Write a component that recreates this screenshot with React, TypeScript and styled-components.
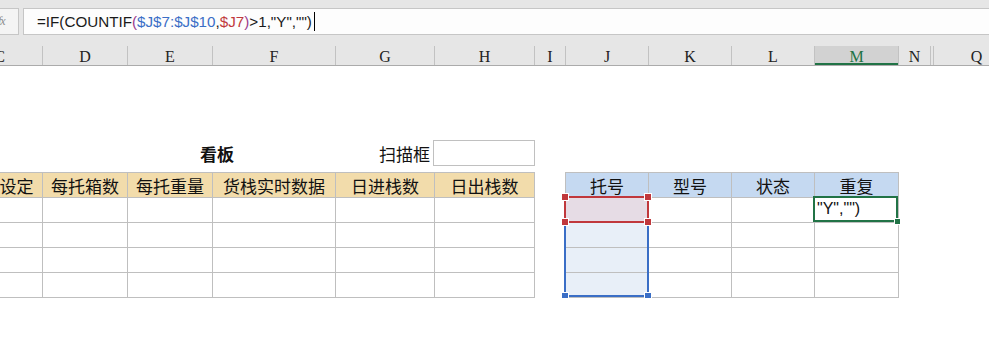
import React from 'react';
import styled, { createGlobalStyle, css } from 'styled-components';

const GlobalStyle = createGlobalStyle`
  html, body { margin: 0; padding: 0; background: #ffffff; overflow: hidden; }
  body { font-family: "Noto Sans CJK SC", "Liberation Sans", sans-serif; }
`;

const Window = styled.div`
  width: 989px;
  height: 363px;
  overflow: hidden;
  background: #ffffff;
`;

/* ---------- formula bar ---------- */
const FormulaArea = styled.div`
  height: 46px;
  box-sizing: border-box;
  padding-top: 8px;
  background: #e6e6e6;
  display: flex;
  align-items: flex-start;
  gap: 4px;
`;

const FxBox = styled.div`
  width: 19px;
  height: 27px;
  box-sizing: border-box;
  border: 1px solid #c6c6c6;
  border-left: none;
  background: #f4f4f4;
  display: flex;
  align-items: center;
  overflow: hidden;
  color: #8c8c8c;
  font: italic 12px "Liberation Serif", serif;
`;

const FxGlyph = styled.span`
  margin-left: -2px;
  letter-spacing: -1px;
`;

const FormulaInput = styled.div`
  flex: 1;
  height: 27px;
  box-sizing: border-box;
  border: 1px solid #c6c6c6;
  border-right: none;
  background: #fdfdfd;
  padding-left: 13px;
  display: flex;
  align-items: center;
  font: 15.2px "Liberation Sans", Arial, sans-serif;
  color: #1a1a1a;
  white-space: pre;
`;

const Tok = styled.span<{ $c?: string }>`
  color: ${(p) => p.$c || '#1a1a1a'};
`;

const Caret = styled.span`
  display: inline-block;
  width: 0;
  height: 19px;
  border-left: 1.5px solid #000;
  margin-left: 2px;
`;

/* ---------- sheet ---------- */
const Viewport = styled.div`
  overflow: hidden;
  width: 989px;
`;

const Canvas = styled.div`
  margin-left: -43px;
  width: 1100px;
`;

const HeaderBar = styled.div`
  display: flex;
  height: 20px;
  box-sizing: border-box;
  border-bottom: 1px solid #ababab;
  background: #e6e6e6;
`;

const ColHead = styled.div<{ $w: number; $sel?: boolean }>`
  width: ${(p) => p.$w}px;
  flex: none;
  box-sizing: border-box;
  border-right: 1px solid #c2c2c2;
  display: flex;
  align-items: center;
  justify-content: center;
  padding-top: 2px;
  font: 16px "Liberation Serif", "DejaVu Serif", serif;
  color: #222;
  ${(p) =>
    p.$sel &&
    css`
      background: #d2d2d2;
      color: #217346;
      box-shadow: inset 0 -2px 0 #217346;
    `}
`;

const Body = styled.div`
  padding-top: 74px;
`;

const TitleRow = styled.div`
  width: 578px;
  height: 26px;
  display: flex;
  align-items: center;
`;

const Title = styled.div`
  margin-left: 243px;
  font-weight: 700;
  font-size: 17px;
  color: #111;
`;

const ScanLabel = styled.div`
  margin-left: auto;
  margin-right: 3px;
  font-size: 17px;
  color: #111;
`;

const ScanBox = styled.div`
  width: 102px;
  height: 26px;
  box-sizing: border-box;
  border: 1px solid #c0c0c0;
  background: #fff;
`;

const TablesRow = styled.div`
  display: flex;
  align-items: flex-start;
  margin-top: 6px;
`;

const Table = styled.div<{ $cols: number[]; $leftBorder?: boolean; $offset?: number }>`
  display: grid;
  grid-template-columns: ${(p) => p.$cols.map((c) => `${c}px`).join(' ')};
  grid-auto-rows: 25px;
  border-top: 1px solid #bfbfbf;
  border-left: ${(p) => (p.$leftBorder ? '1px solid #bfbfbf' : 'none')};
  margin-left: ${(p) => p.$offset || 0}px;
`;

const Cell = styled.div<{ $head?: 'tan' | 'blue'; $fill?: 'pink' | 'blue' }>`
  position: relative;
  box-sizing: border-box;
  border-right: 1px solid #bfbfbf;
  border-bottom: 1px solid #bfbfbf;
  display: flex;
  align-items: center;
  justify-content: center;
  font-size: 17px;
  color: #111;
  white-space: nowrap;
  background: ${(p) =>
    p.$head === 'tan'
      ? '#f2dcab'
      : p.$head === 'blue'
      ? '#c5d9f1'
      : p.$fill === 'pink'
      ? '#e6dce5'
      : p.$fill === 'blue'
      ? '#e8eff8'
      : '#ffffff'};
`;

const RefBox = styled.div<{ $tone: 'red' | 'blue' }>`
  position: absolute;
  left: -2px;
  right: -1px;
  top: -2px;
  bottom: ${(p) => (p.$tone === 'blue' ? '-50px' : '-1px')};
  border: 2px solid ${(p) => (p.$tone === 'red' ? '#c0383c' : '#3a6ec6')};
  z-index: ${(p) => (p.$tone === 'red' ? 3 : 2)};
  pointer-events: none;
`;

const Handle = styled.span<{ $tone: 'red' | 'blue'; $v: 'top' | 'bottom'; $h: 'left' | 'right' }>`
  position: absolute;
  width: 6px;
  height: 6px;
  background: ${(p) => (p.$tone === 'red' ? '#c0383c' : '#3a6ec6')};
  box-shadow: 0 0 0 1px #ffffff;
  ${(p) => (p.$v === 'top' ? 'top: -4px;' : 'bottom: -4px;')}
  ${(p) => (p.$h === 'left' ? 'left: -4px;' : 'right: -4px;')}
`;

const ActiveBox = styled.div`
  position: absolute;
  left: -2px;
  right: 0;
  top: -2px;
  bottom: 0;
  border: 2px solid #217346;
  z-index: 4;
  display: flex;
  align-items: center;
  padding-left: 2px;
  font: 16px "Liberation Sans", Arial, sans-serif;
  color: #111;
  white-space: pre;
`;

const FillHandle = styled.span`
  position: absolute;
  right: -4px;
  bottom: -4px;
  width: 5px;
  height: 5px;
  background: #217346;
  box-shadow: 0 0 0 1px #ffffff;
`;

const columns = [
  { l: 'C', w: 86 },
  { l: 'D', w: 85 },
  { l: 'E', w: 85 },
  { l: 'F', w: 123 },
  { l: 'G', w: 99 },
  { l: 'H', w: 100 },
  { l: 'I', w: 31 },
  { l: 'J', w: 83 },
  { l: 'K', w: 83 },
  { l: 'L', w: 83 },
  { l: 'M', w: 84, sel: true },
  { l: 'N', w: 32 },
  { l: '', w: 3 },
  { l: 'Q', w: 86 },
];

const leftCols = [86, 85, 85, 123, 99, 100];
const leftHeads = ['型号设定', '每托箱数', '每托重量', '货栈实时数据', '日进栈数', '日出栈数'];
const rightCols = [83, 83, 83, 84];
const rightHeads = ['托号', '型号', '状态', '重复'];

const Corners = ({ tone }: { tone: 'red' | 'blue' }) => (
  <>
    <Handle $tone={tone} $v="top" $h="left" />
    <Handle $tone={tone} $v="top" $h="right" />
    <Handle $tone={tone} $v="bottom" $h="left" />
    <Handle $tone={tone} $v="bottom" $h="right" />
  </>
);

export default function App() {
  const rows = [0, 1, 2, 3];
  return (
    <Window>
      <GlobalStyle />
      <FormulaArea>
        <FxBox>
          <FxGlyph>fx</FxGlyph>
        </FxBox>
        <FormulaInput>
          <Tok>=IF(COUNTIF</Tok>
          <Tok $c="#9a3b8e">(</Tok>
          <Tok $c="#3a6ec6">$J$7:$J$10</Tok>
          <Tok>,</Tok>
          <Tok $c="#c0383c">$J7</Tok>
          <Tok $c="#9a3b8e">)</Tok>
          <Tok>{'>1,"Y","")'}</Tok>
          <Caret />
        </FormulaInput>
      </FormulaArea>
      <Viewport>
        <Canvas>
          <HeaderBar>
            {columns.map((c, i) => (
              <ColHead key={i} $w={c.w} $sel={c.sel}>
                {c.l}
              </ColHead>
            ))}
          </HeaderBar>
          <Body>
            <TitleRow>
              <Title>看板</Title>
              <ScanLabel>扫描框</ScanLabel>
              <ScanBox />
            </TitleRow>
            <TablesRow>
              <Table $cols={leftCols}>
                {leftHeads.map((h) => (
                  <Cell key={h} $head="tan">
                    {h}
                  </Cell>
                ))}
                {rows.map((r) =>
                  leftCols.map((_, c) => <Cell key={`l${r}-${c}`} />)
                )}
              </Table>
              <Table $cols={rightCols} $leftBorder $offset={30}>
                {rightHeads.map((h) => (
                  <Cell key={h} $head="blue">
                    {h}
                  </Cell>
                ))}
                {rows.map((r) =>
                  rightCols.map((_, c) => {
                    const key = `r${r}-${c}`;
                    if (c === 0 && r === 0)
                      return (
                        <Cell key={key} $fill="pink">
                          <RefBox $tone="red">
                            <Corners tone="red" />
                          </RefBox>
                        </Cell>
                      );
                    if (c === 0 && r === 1)
                      return (
                        <Cell key={key} $fill="blue">
                          <RefBox $tone="blue">
                            <Corners tone="blue" />
                          </RefBox>
                        </Cell>
                      );
                    if (c === 0) return <Cell key={key} $fill="blue" />;
                    if (c === 3 && r === 0)
                      return (
                        <Cell key={key}>
                          <ActiveBox>
                            {'"Y","")'}
                            <FillHandle />
                          </ActiveBox>
                        </Cell>
                      );
                    return <Cell key={key} />;
                  })
                )}
              </Table>
            </TablesRow>
          </Body>
        </Canvas>
      </Viewport>
    </Window>
  );
}
